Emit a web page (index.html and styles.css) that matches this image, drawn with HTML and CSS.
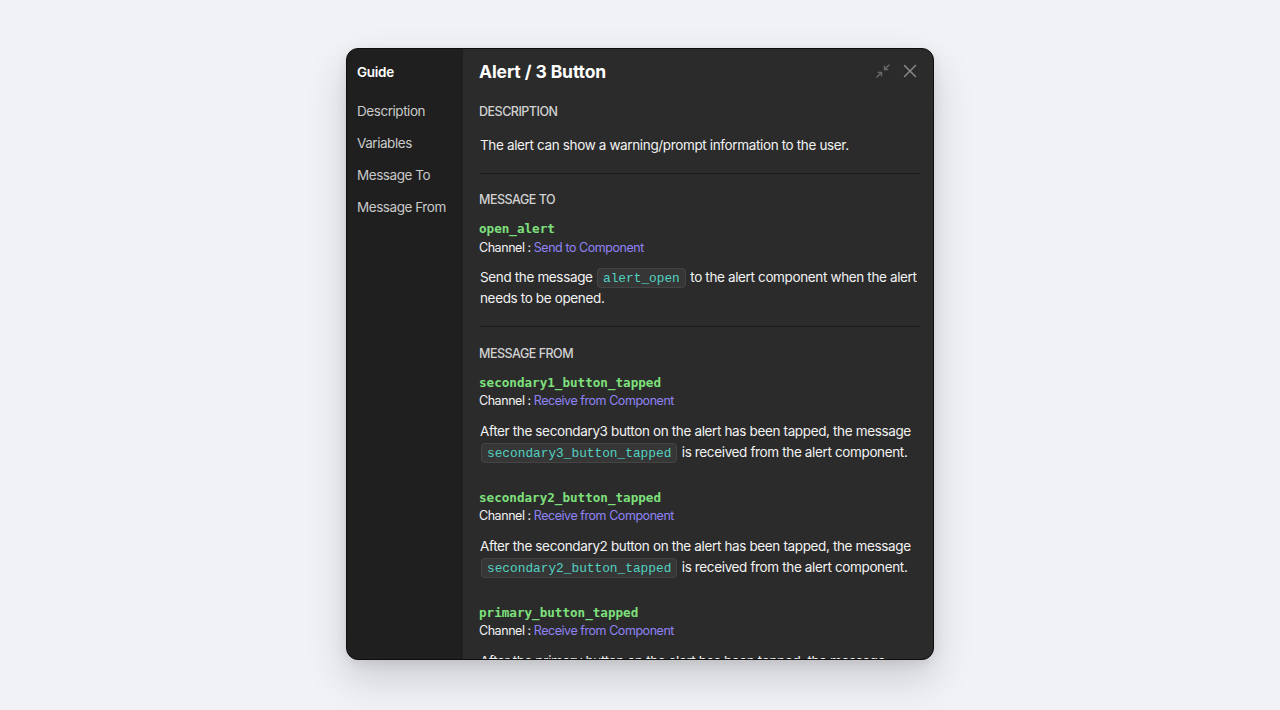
FILE: index.html
```html
<!DOCTYPE html>
<html lang="en">
<head>
<meta charset="utf-8">
<title>Alert / 3 Button</title>
<link rel="stylesheet" href="styles.css">
</head>
<body>
<div class="window">
  <aside class="sidebar">
    <div class="side-title">Guide</div>
    <nav class="side-nav">
      <div class="side-item">Description</div>
      <div class="side-item">Variables</div>
      <div class="side-item">Message To</div>
      <div class="side-item">Message From</div>
    </nav>
  </aside>
  <main class="main">
    <header class="header">
      <h1 class="title">Alert / 3 Button</h1>
      <div class="actions">
        <svg class="icon-min" width="16" height="16" viewBox="0 0 16 16" fill="none" stroke="currentColor" stroke-width="1.4" stroke-linecap="round" stroke-linejoin="round">
          <path d="M14 2 L9.5 6.5"/>
          <path d="M9.5 3.3 V6.5 H12.7"/>
          <path d="M2 14 L6.5 9.5"/>
          <path d="M3.3 9.5 H6.5 V12.7"/>
        </svg>
        <svg class="icon-close" width="14" height="14" viewBox="0 0 14 14" fill="none" stroke="currentColor" stroke-width="1.5" stroke-linecap="round">
          <path d="M1.5 1.5 L12.5 12.5"/>
          <path d="M12.5 1.5 L1.5 12.5"/>
        </svg>
      </div>
    </header>

    <section class="section">
      <h2 class="section-title first">DESCRIPTION</h2>
      <p class="para desc">The alert can show a warning/prompt information to the user.</p>
    </section>

    <hr class="divider">

    <section class="section">
      <h2 class="section-title">MESSAGE TO</h2>
      <div class="msg">
        <div class="msg-name">open_alert</div>
        <div class="channel">Channel : <span class="link">Send to Component</span></div>
        <p class="para">Send the message <code class="code">alert_open</code> to the alert component when the alert needs to be opened.</p>
      </div>
    </section>

    <hr class="divider second">

    <section class="section">
      <h2 class="section-title">MESSAGE FROM</h2>
      <div class="msg">
        <div class="msg-name">secondary1_button_tapped</div>
        <div class="channel">Channel : <span class="link">Receive from Component</span></div>
        <p class="para">After the secondary3 button on the alert has been tapped, the message <code class="code">secondary3_button_tapped</code> is received from the alert component.</p>
      </div>
      <div class="msg">
        <div class="msg-name">secondary2_button_tapped</div>
        <div class="channel">Channel : <span class="link">Receive from Component</span></div>
        <p class="para">After the secondary2 button on the alert has been tapped, the message <code class="code">secondary2_button_tapped</code> is received from the alert component.</p>
      </div>
      <div class="msg">
        <div class="msg-name">primary_button_tapped</div>
        <div class="channel">Channel : <span class="link">Receive from Component</span></div>
        <p class="para">After the primary button on the alert has been tapped, the message <code class="code">primary_button_tapped</code> is received from the alert component.</p>
      </div>
    </section>
  </main>
</div>
</body>
</html>
```

FILE: styles.css
```css
* { box-sizing: border-box; }

html, body {
  margin: 0;
  padding: 0;
  height: 100%;
}

body {
  background: #f1f2f6;
  font-family: Inter, "Noto Sans", "Liberation Sans", sans-serif;
  color: #f2f2f2;
  display: flex;
  justify-content: center;
  padding-top: 48px;
  overflow: hidden;
}

.window {
  width: 588px;
  height: 612px;
  display: flex;
  background: #2b2b2b;
  border: 1px solid #0e0e0e;
  border-radius: 12px;
  overflow: hidden;
  box-shadow: 0 18px 40px rgba(0, 0, 0, 0.16), 0 4px 12px rgba(0, 0, 0, 0.08);
}

.sidebar {
  width: 116px;
  flex: none;
  background: #1f1f1f;
  padding: 14px 10px 0 10px;
}

.side-title {
  font-size: 13.5px;
  font-weight: 600;
  line-height: 18px;
  color: #ffffff;
  letter-spacing: -0.3px;
}

.side-nav {
  margin-top: 21px;
  display: flex;
  flex-direction: column;
  gap: 14px;
}

.side-item {
  font-size: 13.5px;
  line-height: 18px;
  color: #c9c9c9;
  letter-spacing: -0.45px;
}

.main {
  flex: 1;
  min-width: 0;
  padding: 11px 13px 0 16px;
  overflow: hidden;
}

.header {
  display: flex;
  align-items: center;
  justify-content: space-between;
  height: 24px;
}

.title {
  margin: 0;
  font-size: 17.5px;
  font-weight: 700;
  line-height: 24px;
  color: #ffffff;
  letter-spacing: -0.1px;
}

.actions {
  display: flex;
  align-items: center;
  gap: 12px;
  margin-top: -3px;
  margin-right: 3px;
}

.icon-min { color: #6a6a6a; }
.icon-close { color: #8a8a8a; }

.section-title {
  margin: 0;
  font-size: 12.5px;
  font-weight: 500;
  line-height: 18px;
  color: #d2d2d2;
  letter-spacing: -0.5px;
}

.section-title.first {
  margin-top: 19px;
}

.para {
  margin: 10.5px 0 0 1px;
  font-size: 13.5px;
  line-height: 21px;
  color: #f2f2f2;
  letter-spacing: -0.36px;
}

.para.desc {
  margin-top: 13.5px;
}

.divider {
  margin: 17.5px 0 17px 0;
  border: none;
  border-top: 1px solid #1c1c1c;
  height: 0;
}

.divider.second {
  margin: 16.5px 0 18px 0;
}

.msg {
  margin-top: 11px;
}

.msg + .msg {
  margin-top: 26px;
}

.msg-name {
  font-family: "DejaVu Sans Mono", "Liberation Mono", monospace;
  font-weight: 700;
  font-size: 12.6px;
  line-height: 18px;
  color: #7ee07c;
}

.channel {
  margin-top: 0.5px;
  font-size: 12.5px;
  line-height: 18px;
  color: #f2f2f2;
  letter-spacing: -0.45px;
}

.link {
  color: #8f83f5;
}

.code {
  font-family: "Liberation Mono", "DejaVu Sans Mono", monospace;
  font-size: 12.8px;
  line-height: 1;
  letter-spacing: 0;
  color: #52d2c1;
  background: #363636;
  border: 1px solid #444444;
  border-radius: 4px;
  padding: 2px 5px 1px;
  margin: 0 1px;
}
```
